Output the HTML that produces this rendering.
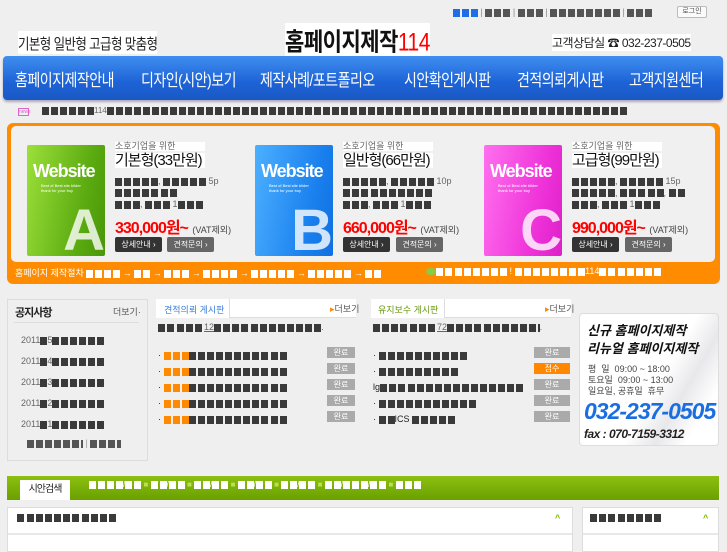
<!DOCTYPE html>
<html><head><meta charset="utf-8">
<style>
*{margin:0;padding:0;box-sizing:border-box}
body{width:727px;height:545px;overflow:hidden;background:#efefef;font-family:"Liberation Sans","Noto Sans CJK KR",sans-serif;position:relative;color:#222}
.a{position:absolute;white-space:nowrap}
.k{display:inline-block;height:8px;vertical-align:middle;background:repeating-linear-gradient(90deg,#3a3a3a 0 7px,transparent 7px 9px)}
.kw{background:repeating-linear-gradient(90deg,#fff 0 7px,transparent 7px 9px)}
.kb{background:repeating-linear-gradient(90deg,#1e6ee8 0 7px,transparent 7px 9px)}
.ko{background:repeating-linear-gradient(90deg,#ff8a00 0 7px,transparent 7px 9px)}
.kg{background:repeating-linear-gradient(90deg,#555 0 7px,transparent 7px 9px)}
.nav span{position:absolute;top:68px;color:#fff;font-size:14px;letter-spacing:-.5px;transform:scaleY(1.2);transform-origin:top left}
.box{position:absolute;width:78px;height:111px;border-radius:2px;overflow:hidden}
.box .w{position:absolute;left:6px;top:16px;color:#fff;font-size:18px;font-weight:bold;letter-spacing:-1px}
.box .s{position:absolute;left:14px;top:38px;color:#fff;font-size:4px;line-height:5px}
.box .L{position:absolute;right:0;bottom:-8px;font-size:58px;font-weight:bold;color:rgba(255,255,255,.8)}
.sm{font-size:9px;color:#666}
.ttl{font-size:15px;color:#111;letter-spacing:-1px}
.pr{font-size:16px;color:#f00;font-weight:bold;letter-spacing:-1px}
.vat{font-size:9px;color:#444}
.btn{position:absolute;height:15px;width:47px;border-radius:2px;color:#fff;font-size:8px;line-height:15px;text-align:center}
.bd{background:#333}.bg{background:#666}
.badge{position:absolute;width:28px;height:11px;background:#aaa;color:#fff;font-size:8px;line-height:11px;text-align:center}
</style></head><body>
<div class="a" style="left:453px;top:7px;font-size:9px;color:#888">
<span class="k kb" style="width:25px"></span> | <span class="k kg" style="width:25px"></span> | <span class="k kg" style="width:25px"></span> | <span class="k kg" style="width:70px"></span> | <span class="k kg" style="width:25px"></span></div>
<div class="a" style="left:677px;top:6px;width:30px;height:12px;border:1px solid #bbb;border-radius:2px;background:#fafafa;font-size:7px;text-align:center;line-height:10px;color:#555">로그인</div>

<div class="a" style="left:18px;top:31px;font-size:12.5px;letter-spacing:-.6px;background:#fff;transform:scaleY(1.2);transform-origin:top left">기본형 일반형 고급형 맞춤형</div>
<div class="a" style="left:285px;top:23px;font-size:21px;font-weight:bold;letter-spacing:-.5px;background:#fff;color:#111;transform:scaleY(1.2);transform-origin:top left">홈페이지제작<span style="color:#f00;font-weight:normal">114</span></div>
<div class="a" style="left:552px;top:34px;font-size:12px;letter-spacing:-.5px;background:#fff">고객상담실 ☎ 032-237-0505</div>

<div class="a" style="left:3px;top:56px;width:720px;height:44px;border-radius:4px;background:linear-gradient(#3f8ef0,#1d63d6 60%,#1a58c4);box-shadow:0 2px 2px #aab"></div>
<div class="nav">
<span style="left:15px">홈페이지제작안내</span><span style="left:141px">디자인(시안)보기</span><span style="left:260px">제작사례/포트폴리오</span><span style="left:404px">시안확인게시판</span><span style="left:517px">견적의뢰게시판</span><span style="left:629px">고객지원센터</span></div>

<div class="a" style="left:18px;top:108px;width:11px;height:8px;border:1px solid #d6c;font-size:5px;color:#d6c;line-height:6px">news</div>
<div class="a" style="left:42px;top:106px;font-size:8px"><span class="k" style="width:52px"></span><span style="color:#666">114</span><span class="k" style="width:520px"></span></div>

<div class="a" style="left:7px;top:123px;width:713px;height:161px;background:#ff8c00;border-radius:6px"></div>
<div class="a" style="left:11px;top:126px;width:704px;height:136px;background:#f0f0f0;border-radius:5px"></div>

<div class="box" style="left:27px;top:145px;background:linear-gradient(100deg,#9ce03a,#5aaa10 70%,#4a9608)"><div class="w">Website</div><div class="s">Best of Best site blider<br>thank for your buy</div><div class="L">A</div></div>
<div class="box" style="left:255px;top:145px;background:linear-gradient(100deg,#4cb0ff,#1a80ee 70%,#1070e0)"><div class="w">Website</div><div class="s">Best of Best site blider<br>thank for your buy</div><div class="L">B</div></div>
<div class="box" style="left:484px;top:145px;background:linear-gradient(100deg,#ff70ee,#ee30d8 70%,#dd20c8)"><div class="w">Website</div><div class="s">Best of Best site blider<br>thank for your buy</div><div class="L">C</div></div>

<div class="a" style="left:115px;top:142px;line-height:1"><div class="sm" style="background:#fff;width:90px">소호기업을 위한</div><div class="ttl" style="background:#fff;width:90px;margin-top:2px">기본형(33만원)</div></div>
<div class="a" style="left:115px;top:176px;font-size:9px;color:#666;line-height:11.5px"><span class="k" style="width:43px"></span>, <span class="k" style="width:43px"></span> 5p<br><span class="k" style="width:43px"></span> <span class="k" style="width:16px"></span><br><span class="k" style="width:25px"></span>, <span class="k" style="width:25px"></span> 1<span class="k" style="width:7px"></span> <span class="k" style="width:16px"></span></div>
<div class="a" style="left:115px;top:214px"><span class="pr">330,000원~</span> <span class="vat">(VAT제외)</span></div>
<div class="btn bd" style="left:115px;top:237px">상세안내 ›</div><div class="btn bg" style="left:167px;top:237px">견적문의 ›</div>

<div class="a" style="left:343px;top:142px;line-height:1"><div class="sm" style="background:#fff;width:90px">소호기업을 위한</div><div class="ttl" style="background:#fff;width:90px;margin-top:2px">일반형(66만원)</div></div>
<div class="a" style="left:343px;top:176px;font-size:9px;color:#666;line-height:11.5px"><span class="k" style="width:43px"></span>, <span class="k" style="width:43px"></span> 10p<br><span class="k" style="width:25px"></span> <span class="k" style="width:16px"></span> <span class="k" style="width:43px"></span><br><span class="k" style="width:25px"></span>, <span class="k" style="width:25px"></span> 1<span class="k" style="width:7px"></span> <span class="k" style="width:16px"></span></div>
<div class="a" style="left:343px;top:214px"><span class="pr">660,000원~</span> <span class="vat">(VAT제외)</span></div>
<div class="btn bd" style="left:343px;top:237px">상세안내 ›</div><div class="btn bg" style="left:396px;top:237px">견적문의 ›</div>

<div class="a" style="left:572px;top:142px;line-height:1"><div class="sm" style="background:#fff;width:90px">소호기업을 위한</div><div class="ttl" style="background:#fff;width:90px;margin-top:2px">고급형(99만원)</div></div>
<div class="a" style="left:572px;top:176px;font-size:9px;color:#666;line-height:11.5px"><span class="k" style="width:43px"></span>, <span class="k" style="width:43px"></span> 15p<br><span class="k" style="width:43px"></span>, <span class="k" style="width:25px"></span> <span class="k" style="width:16px"></span>, <span class="k" style="width:16px"></span><br><span class="k" style="width:25px"></span>, <span class="k" style="width:25px"></span> 1<span class="k" style="width:7px"></span> <span class="k" style="width:16px"></span></div>
<div class="a" style="left:572px;top:214px"><span class="pr">990,000원~</span> <span class="vat">(VAT제외)</span></div>
<div class="btn bd" style="left:572px;top:237px">상세안내 ›</div><div class="btn bg" style="left:625px;top:237px">견적문의 ›</div>

<div class="a" style="left:15px;top:266px;font-size:9px;color:#fff">홈페이지 제작절차 <span class="k kw" style="width:34px"></span> → <span class="k kw" style="width:16px"></span> → <span class="k kw" style="width:25px"></span> → <span class="k kw" style="width:34px"></span> → <span class="k kw" style="width:43px"></span> → <span class="k kw" style="width:43px"></span> → <span class="k kw" style="width:16px"></span></div>
<div class="a" style="left:426px;top:266px;font-size:9px;color:#fff"><span style="display:inline-block;width:10px;height:7px;background:#8c4;border-radius:50%;vertical-align:middle"></span><span class="k kw" style="width:16px"></span> <span class="k kw" style="width:16px"></span> <span class="k kw" style="width:34px"></span> ! <span class="k kw" style="width:16px"></span> <span class="k kw" style="width:52px"></span>114<span class="k kw" style="width:16px"></span> <span class="k kw" style="width:43px"></span></div>

<div class="a" style="left:7px;top:299px;width:141px;height:162px;border:1px solid #ddd;background:#efefef"></div>
<div class="a" style="left:15px;top:304px;font-size:11px;font-weight:bold;letter-spacing:-1px">공지사항</div>
<div class="a" style="left:113px;top:305px;font-size:9px;color:#555">더보기·</div>
<div class="a" style="left:14px;top:322px;width:125px;height:1px;background:#ddd"></div>
<div class="a" style="left:21px;top:330px;font-size:9px;color:#666;line-height:21px">
2011<span class="k" style="width:7px"></span>5<span class="k" style="width:52px"></span><br>2011<span class="k" style="width:7px"></span>4<span class="k" style="width:52px"></span><br>2011<span class="k" style="width:7px"></span>3<span class="k" style="width:52px"></span><br>2011<span class="k" style="width:7px"></span>2<span class="k" style="width:52px"></span><br>2011<span class="k" style="width:7px"></span>1<span class="k" style="width:52px"></span></div>
<div class="a" style="left:27px;top:438px;font-size:9px;color:#999"><span class="k kg" style="width:56px"></span> | <span class="k kg" style="width:31px"></span></div>

<div class="a" style="left:156px;top:299px;width:200px;height:19px;background:#fff"></div>
<div class="a" style="left:229px;top:317px;width:127px;height:1px;background:#ddd"></div>
<div class="a" style="left:229px;top:299px;width:1px;height:18px;background:#ddd"></div>
<div class="a" style="left:164px;top:303px;font-size:9px;color:#3a7fd8">견적의뢰 게시판</div>
<div class="a" style="left:330px;top:302px;font-size:9px;color:#555"><span style="color:#f80">▸</span>더보기</div>
<div class="a" style="left:158px;top:322px;font-size:9px;color:#666"><span class="k" style="width:16px"></span> <span class="k" style="width:25px"></span> <span style="text-decoration:underline">12<span class="k" style="width:34px"></span></span> <span class="k" style="width:25px"></span> <span class="k" style="width:43px"></span>.</div>
<div class="a" style="left:158px;top:347px;font-size:9px;line-height:16px">
· <span class="k ko" style="width:25px"></span><span class="k" style="width:16px"></span> <span class="k" style="width:61px"></span> <span class="k" style="width:16px"></span><br>
· <span class="k ko" style="width:25px"></span><span class="k" style="width:16px"></span> <span class="k" style="width:61px"></span> <span class="k" style="width:16px"></span><br>
· <span class="k ko" style="width:25px"></span><span class="k" style="width:16px"></span> <span class="k" style="width:61px"></span> <span class="k" style="width:16px"></span><br>
· <span class="k ko" style="width:25px"></span><span class="k" style="width:16px"></span> <span class="k" style="width:61px"></span> <span class="k" style="width:16px"></span><br>
· <span class="k ko" style="width:25px"></span><span class="k" style="width:16px"></span> <span class="k" style="width:61px"></span> <span class="k" style="width:16px"></span></div>
<div class="badge" style="left:327px;top:347px">완료</div><div class="badge" style="left:327px;top:363px">완료</div><div class="badge" style="left:327px;top:379px">완료</div><div class="badge" style="left:327px;top:395px">완료</div><div class="badge" style="left:327px;top:411px">완료</div>

<div class="a" style="left:371px;top:299px;width:200px;height:19px;background:#fff"></div>
<div class="a" style="left:444px;top:317px;width:127px;height:1px;background:#ddd"></div>
<div class="a" style="left:444px;top:299px;width:1px;height:18px;background:#ddd"></div>
<div class="a" style="left:378px;top:303px;font-size:9px;color:#6a9a10">유지보수 게시판</div>
<div class="a" style="left:545px;top:302px;font-size:9px;color:#555"><span style="color:#f80">▸</span>더보기</div>
<div class="a" style="left:373px;top:322px;font-size:9px;color:#666"><span class="k" style="width:34px"></span> <span class="k" style="width:25px"></span> <span style="text-decoration:underline">72<span class="k" style="width:34px"></span></span> <span class="k" style="width:56px"></span>.</div>
<div class="a" style="left:373px;top:347px;font-size:9px;line-height:16px">
· <span class="k" style="width:43px"></span> <span class="k" style="width:43px"></span><br>
· <span class="k" style="width:34px"></span> <span class="k" style="width:43px"></span><br>
lg<span class="k" style="width:25px"></span> <span class="k" style="width:61px"></span> <span class="k" style="width:52px"></span><br>
· <span class="k" style="width:43px"></span> <span class="k" style="width:52px"></span><br>
· <span class="k" style="width:16px"></span>ICS <span class="k" style="width:43px"></span></div>
<div class="badge" style="left:534px;top:347px;width:36px">완료</div><div class="badge" style="left:534px;top:363px;width:36px;background:#f80">접수</div><div class="badge" style="left:534px;top:379px;width:36px">완료</div><div class="badge" style="left:534px;top:395px;width:36px">완료</div><div class="badge" style="left:534px;top:411px;width:36px">완료</div>

<div class="a" style="left:579px;top:313px;width:140px;height:133px;background:linear-gradient(120deg,#fff 55%,#e8e8ec 70%,#fff 85%);border:1px solid #ddd;border-radius:4px"></div>
<div class="a" style="left:587px;top:322px;font-size:13px;font-weight:bold;font-style:italic;line-height:18px;color:#111">신규 홈페이지제작<br>리뉴얼 홈페이지제작</div>
<div class="a" style="left:588px;top:364px;font-size:9px;line-height:11px;color:#444">평 &nbsp;일 &nbsp;09:00 ~ 18:00<br>토요일 &nbsp;09:00 ~ 13:00<br>일요일, 공휴일 &nbsp;휴무</div>
<div class="a" style="left:584px;top:398px;font-size:23px;font-weight:bold;font-style:italic;color:#1a6ee0;letter-spacing:-1px">032-237-0505</div>
<div class="a" style="left:584px;top:427px;font-size:12px;font-weight:bold;font-style:italic;color:#222;letter-spacing:-.5px">fax : 070-7159-3312</div>

<div class="a" style="left:7px;top:476px;width:712px;height:24px;background:linear-gradient(#8cc010,#6aa000)"></div>
<div class="a" style="left:20px;top:480px;width:50px;height:20px;background:#fff;font-size:10px;text-align:center;line-height:19px;letter-spacing:-1px">시안검색</div>
<div class="a" style="left:89px;top:480px;font-size:8px;color:#fff"><span class="k kw" style="width:34px"></span>/<span class="k kw" style="width:16px"></span> <span style="color:#b8e050">■</span> <span class="k kw" style="width:16px"></span>/<span class="k kw" style="width:16px"></span> <span style="color:#b8e050">■</span> <span class="k kw" style="width:16px"></span>/<span class="k kw" style="width:16px"></span> <span style="color:#b8e050">■</span> <span class="k kw" style="width:16px"></span>/<span class="k kw" style="width:16px"></span> <span style="color:#b8e050">■</span> <span class="k kw" style="width:16px"></span>/<span class="k kw" style="width:16px"></span> <span style="color:#b8e050">■</span> <span class="k kw" style="width:16px"></span>/<span class="k kw" style="width:25px"></span>/<span class="k kw" style="width:16px"></span> <span style="color:#b8e050">■</span> <span class="k kw" style="width:25px"></span></div>

<div class="a" style="left:7px;top:507px;width:566px;height:45px;background:#fff;border:1px solid #ddd"></div>
<div class="a" style="left:8px;top:533px;width:564px;height:2px;background:#e8e8e8"></div>
<div class="a" style="left:17px;top:512px;font-size:9px"><span class="k" style="width:7px"></span> <span class="k" style="width:16px"></span> <span class="k" style="width:34px"></span> <span class="k" style="width:34px"></span></div>
<div class="a" style="left:555px;top:513px;font-size:9px;color:#7b0;font-weight:bold">^</div>
<div class="a" style="left:582px;top:507px;width:137px;height:45px;background:#fff;border:1px solid #ddd"></div>
<div class="a" style="left:583px;top:533px;width:135px;height:2px;background:#e8e8e8"></div>
<div class="a" style="left:590px;top:512px;font-size:9px"><span class="k" style="width:25px"></span> <span class="k" style="width:16px"></span> <span class="k" style="width:25px"></span></div>
<div class="a" style="left:703px;top:513px;font-size:9px;color:#7b0;font-weight:bold">^</div>
</body></html>
